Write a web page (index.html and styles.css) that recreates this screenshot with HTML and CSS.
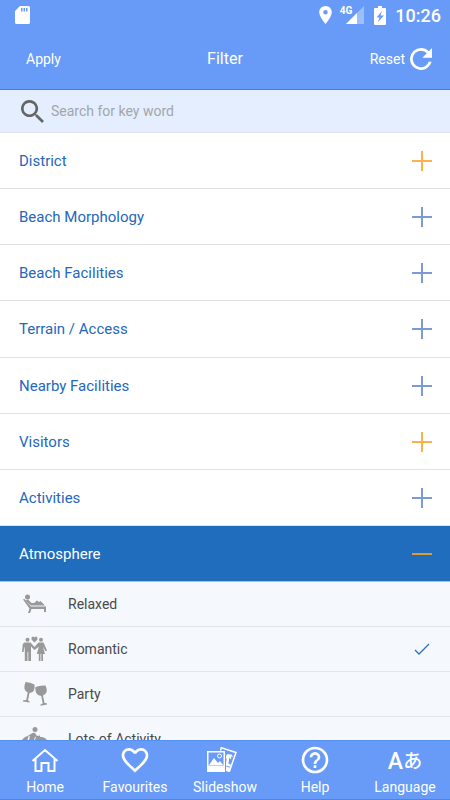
FILE: index.html
```html
<!DOCTYPE html>
<html lang="en">
<head>
  <meta charset="utf-8">
  <meta name="viewport" content="width=device-width, initial-scale=1">
  <title>Filter</title>
  <link rel="stylesheet" href="styles.css">
</head>
<body>
  <div class="statusbar">
    <svg class="sd" width="15" height="18" viewBox="0 0 15 18"><path fill="#fff" fill-rule="evenodd" d="M5 0h8.500q1.500 0 1.500 1.500v15q0 1.500-1.500 1.500h-12Q0 18 0 16.500V5zM6 2v3.500h1.500V2zM8.500 2v3.500H10V2zM11 2v3.500h1.500V2z"/></svg>
    <svg class="pin" width="13" height="18" viewBox="5 2 14 20"><path fill="#fff" d="M12 2C8.130 2 5 5.130 5 9c0 5.250 7 13 7 13s7-7.750 7-13c0-3.870-3.130-7-7-7zm0 9.500a2.500 2.500 0 0 1 0-5 2.500 2.500 0 0 1 0 5z"/></svg>
    <span class="network">4G</span>
    <svg class="signal" width="18" height="18" viewBox="0 0 18 18"><path fill="#fff" opacity=".35" d="M18 0v18H0z"/><path fill="#fff" d="M11 7v11H0z"/></svg>
    <svg class="battery" width="12" height="19" viewBox="0 0 12 19"><path fill="#fff" fill-rule="evenodd" d="M4 0h4v2h3q1 0 1 1v15q0 1-1 1H1q-1 0-1-1V3q0-1 1-1h3zM8 5l-5.500 6.500h3L4 16l6-6.500H6.500z"/></svg>
    <span class="time">10:26</span>
  </div>

  <header class="header">
    <button class="apply" type="button">Apply</button>
    <h1>Filter</h1>
    <button class="reset" type="button">Reset
      <svg width="22" height="22" viewBox="4 4 16 16"><path fill="#fff" d="M17.650 6.350A7.960 7.960 0 0 0 12 4a8 8 0 1 0 7.730 10h-2.080A6 6 0 1 1 12 6c1.660 0 3.140.690 4.220 1.780L13 11h7V4z"/></svg>
    </button>
  </header>

  <div class="search">
    <label for="keyword" aria-label="Search"><svg width="23" height="23" viewBox="3 3 17.500 17.500"><path fill="#666" d="M15.500 14h-.790l-.280-.270A6.500 6.500 0 1 0 13.730 14.430l.270.280v.790l5 4.990L20.490 19zm-6 0a4.500 4.500 0 1 1 0-9 4.500 4.500 0 0 1 0 9z"/></svg></label>
    <input type="text" id="keyword" placeholder="Search for key word">
  </div>

  <main class="filters">
    <button class="category marked" type="button">District <i class="sign plus"></i></button>
    <button class="category" type="button">Beach Morphology <i class="sign plus"></i></button>
    <button class="category" type="button">Beach Facilities <i class="sign plus"></i></button>
    <button class="category" type="button">Terrain / Access <i class="sign plus"></i></button>
    <button class="category" type="button">Nearby Facilities <i class="sign plus"></i></button>
    <button class="category marked" type="button">Visitors <i class="sign plus"></i></button>
    <button class="category" type="button">Activities <i class="sign plus"></i></button>
    <button class="category marked open" type="button" aria-expanded="true">Atmosphere <i class="sign"></i></button>

    <div class="options">
      <label class="option" for="relaxed">
        <svg width="26" height="26" viewBox="0 0 26 26" fill="#999">
          <circle cx="5.500" cy="6" r="2.500"/>
          <path d="M3.500 9.500L6 8.500l3.500 3.500H12l3-2.500 2 1.500 1.500-1 4.500 4.500H9z"/>
          <path d="M1 8.500l1.200-.8L9 15.500h15V21h-2v-3H9.500L8 22H6l1.500-4.500z"/>
        </svg>
        <span>Relaxed</span>
        <input type="checkbox" id="relaxed">
        <svg class="tick" width="16" height="12" viewBox="0 0 16 12"><path d="M1 7l4 4L15 1"/></svg>
      </label>
      <label class="option" for="romantic">
        <svg width="26" height="26" viewBox="0 0 26 26" fill="#999">
          <path d="M12.500 6.500L9.500 3.500Q9 1 10.800.5q1 0 1.700 1 .7-1 1.700-1Q16 1 15.500 3.500z"/>
          <circle cx="5.500" cy="3.800" r="2"/>
          <circle cx="19" cy="3.800" r="2"/>
          <path d="M2.500 6.500h6L12.500 11l4-4.500h5l3.500 8-1.500.7-2.500-4.500 2 7.300h-2V25h-1.700v-7h-.8v7h-1.700v-7h-2l2-7.300L12.500 14 9 10.500V25H6.300v-9h-.8v9H2.800V10l-1.300 6H0l.8-8z"/>
        </svg>
        <span>Romantic</span>
        <input type="checkbox" id="romantic" checked>
        <svg class="tick" width="16" height="12" viewBox="0 0 16 12"><path d="M1 7l4 4L15 1"/></svg>
      </label>
      <label class="option" for="party">
        <svg width="26" height="26" viewBox="0 0 26 26" fill="#999">
          <path d="M3.500 1Q8 1.200 12.500 3.500 13.500 11.500 7.500 12L6 19.500l1.500.8v1.200L1 20.500v-1.200l3.200-.3 1.500-7.500Q.5 9 3.500 1z"/>
          <path d="M13.500 6Q18 4 23.500 4.500 27 12 21 14.500l1.500 7.500 2.500.2v1.300L18.500 24.800v-1.300l2.200-1-1.500-7.500Q12.500 14 13.500 6z"/>
        </svg>
        <span>Party</span>
        <input type="checkbox" id="party">
        <svg class="tick" width="16" height="12" viewBox="0 0 16 12"><path d="M1 7l4 4L15 1"/></svg>
      </label>
      <label class="option" for="activity">
        <svg width="26" height="26" viewBox="0 0 26 26" fill="#999">
          <circle cx="13" cy="3.500" r="2.500"/>
          <path d="M9 8q2-2 4-1l2 3 3-.5v1.500l-4 .5-1-1-1 4H7l1-5-1 1-1-1z"/>
          <path d="M0 14q3-4 6.500-4l-1 4 7 1 1.500-4q8-1 11 3l-4 3H4z"/>
        </svg>
        <span>Lots of Activity</span>
        <input type="checkbox" id="activity">
        <svg class="tick" width="16" height="12" viewBox="0 0 16 12"><path d="M1 7l4 4L15 1"/></svg>
      </label>
    </div>
  </main>

  <nav class="tabs">
    <a href="#home">
      <svg width="28" height="28" viewBox="0 0 28 28" fill="none" stroke="#fff" stroke-width="2"><path d="M1.500 15L14 4l12.500 11M4.500 13v12h6v-8h7v8h6V13"/></svg>
      Home
    </a>
    <a href="#favourites">
      <svg width="28" height="28" viewBox="1.500 1.500 21 21"><path fill="#fff" d="M16.500 3c-1.740 0-3.410.810-4.500 2.090C10.910 3.810 9.240 3 7.500 3 4.420 3 2 5.420 2 8.500c0 3.780 3.400 6.860 8.550 11.540L12 21.350l1.450-1.320C18.600 15.360 22 12.280 22 8.500 22 5.420 19.580 3 16.500 3zm-4.400 15.550l-.1.100-.1-.1C7.140 14.240 4 11.390 4 8.500 4 6.500 5.500 5 7.500 5c1.540 0 3.040.990 3.570 2.360h1.870C13.460 5.990 14.960 5 16.500 5c2 0 3.500 1.500 3.500 3.500 0 2.890-3.140 5.740-7.900 10.050z"/></svg>
      Favourites
    </a>
    <a href="#slideshow">
      <svg width="36" height="28" viewBox="0 0 36 28">
        <path fill="none" stroke="#fff" stroke-width="1.500" d="M13.500 4.500l.8-2.800L29 6.500 22.500 25l-3.500-1"/>
        <path fill="#fff" d="M19 20.500l5.200 1.500L22.500 26 19 25z"/>
        <path fill="#fff" d="M19 10q1-3 3.500-1.500Q25 7.500 26 11l-2-.8q1 2-.8 3l-1-2q0 4-.9 6l2.700 1.500-.5 2-4.500-1v-3l1-5-1 2z"/>
        <path fill="#fff" fill-rule="evenodd" d="M0 5h18v21H0zm1.500 1.500v13h15v-13z"/>
        <path fill="#fff" d="M2 19l5-7 4 5 2-2 3 4z"/>
        <circle cx="12.500" cy="10" r="2" fill="none" stroke="#fff"/>
      </svg>
      Slideshow
    </a>
    <a href="#help">
      <svg width="28" height="28" viewBox="1.500 1.500 21 21"><path fill="#fff" d="M11 18h2v-2h-2v2zm1-16a10 10 0 1 0 0 20 10 10 0 0 0 0-20zm0 18a8 8 0 1 1 0-16 8 8 0 0 1 0 16zm0-14a4 4 0 0 0-4 4h2a2 2 0 1 1 4 0c0 2-3 1.750-3 5h2c0-2.250 3-2.500 3-5a4 4 0 0 0-4-4z"/></svg>
      Help
    </a>
    <a href="#language">
      <span class="letters"><b>A</b><span lang="ja">あ</span></span>
      Language
    </a>
  </nav>
</body>
</html>
```
FILE: styles.css
```css
* {
  box-sizing: border-box;
}

body {
  margin: 0;
  height: 100vh;
  display: flex;
  flex-direction: column;
  font-family: Roboto, "Liberation Sans", sans-serif;
  font-size: 15px;
  color: #4a4a4a;
  background-color: #fff;
}

svg {
  display: block;
  flex: none;
}

button {
  font: inherit;
  color: inherit;
  background: none;
  border: none;
  padding: 0;
  cursor: pointer;
}

/* Status bar */
.statusbar {
  display: flex;
  align-items: center;
  height: 30px;
  flex: none;
  padding: 0 9px 0 15px;
  background-color: #689bf7;
  color: #fff;
}

.pin {
  margin-left: auto;
}

.network {
  align-self: flex-start;
  margin: 5px -6px 0 8px;
  font-size: 10px;
  font-weight: bold;
  line-height: 12px;
}

.battery {
  margin: 0 9px 0 10px;
}

.time {
  font-size: 18px;
  font-weight: 500;
}

/* Header */
.header {
  display: grid;
  grid-template-columns: 1fr auto 1fr;
  align-items: center;
  height: 60px;
  flex: none;
  padding: 0 18px 2px;
  border-bottom: 1px solid #3f7fe0;
  background-color: #689bf7;
  color: #fff;
  font-size: 14px;
}

.header h1 {
  margin: 0;
  font-size: 16px;
  font-weight: normal;
}

.apply {
  justify-self: start;
  padding: 0 8px;
}

.reset {
  display: flex;
  align-items: center;
  justify-self: end;
  gap: 5px;
}

/* Search */
.search {
  display: flex;
  align-items: center;
  gap: 7px;
  height: 43px;
  flex: none;
  padding: 0 21px;
  border-bottom: 1px solid #e0e4ea;
  background-color: #e4eefe;
}

.search input {
  flex: 1;
  min-width: 0;
  padding: 0;
  border: none;
  outline: none;
  background: none;
  font: inherit;
  font-size: 14px;
}

.search input::placeholder {
  color: #a3a6aa;
}

/* Filter list */
.filters {
  flex: 1;
  min-height: 0;
  overflow-y: auto;
  scrollbar-width: none;
}

.category {
  display: flex;
  align-items: center;
  justify-content: space-between;
  width: 100%;
  height: 56px;
  padding: 0 18px 0 19px;
  border-bottom: 1px solid #e2e2e2;
  color: #2467bd;
}

.category:nth-child(4) {
  height: 57px;
}

.category.open {
  border-bottom-color: #a9bfdc;
  background-color: #206cbd;
  color: #fff;
}

.sign {
  width: 20px;
  height: 20px;
  color: #7c9ad6;
  background: linear-gradient(currentColor, currentColor) center / 20px 2px no-repeat;
}

.plus {
  background:
    linear-gradient(currentColor, currentColor) center / 20px 2px no-repeat,
    linear-gradient(currentColor, currentColor) center / 2px 20px no-repeat;
}

.marked .sign {
  color: #ffb04c;
}

.open .sign {
  color: #e09c2a;
}

.options {
  background-color: #f5f8fd;
}

.option {
  display: flex;
  align-items: center;
  height: 45px;
  padding: 0 20px 0 22px;
  border-bottom: 1px solid #e1e4e8;
  font-size: 14px;
}

.option span {
  margin-left: 20px;
}

.option input {
  appearance: none;
  width: 0;
  height: 0;
  margin: 0 0 0 auto;
}

.tick {
  visibility: hidden;
  fill: none;
  stroke: #2e70c4;
  stroke-width: 1.3;
}

.option input:checked + .tick {
  visibility: visible;
}

/* Bottom tabs */
.tabs {
  display: grid;
  grid-template-columns: repeat(5, 1fr);
  height: 60px;
  flex: none;
  border-top: 1px solid #5590f4;
  border-bottom: 1px solid #4a86e8;
  background-color: #689bf7;
}

.tabs a {
  display: flex;
  flex-direction: column;
  align-items: center;
  gap: 5px;
  padding-top: 5px;
  color: #fff;
  font-size: 14px;
  line-height: 16px;
  text-decoration: none;
}

.letters {
  display: flex;
  align-items: center;
  height: 28px;
  font-size: 23px;
}

.letters b {
  padding-top: 4px;
  font-weight: 500;
}

.letters span {
  font-family: "Noto Sans CJK JP", sans-serif;
  font-size: 19px;
  font-weight: 500;
}
```
